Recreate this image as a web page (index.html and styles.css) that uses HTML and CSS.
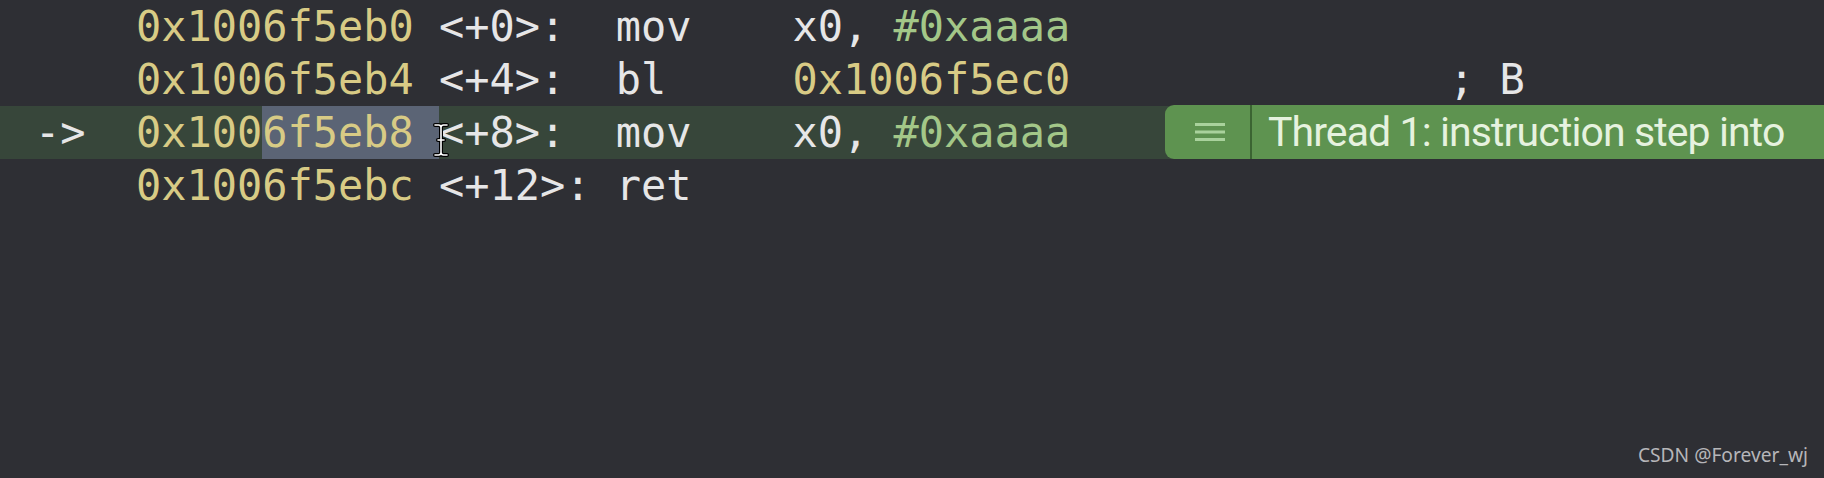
FILE: index.html
```html
<!DOCTYPE html>
<html>
<head>
<meta charset="utf-8">
<link rel="stylesheet" href="styles.css">
</head>
<body>
<div class="screen">
  <div class="code">
    <div class="row"><span class="txt">    <span class="num">0x1006f5eb0</span> <span class="pl">&lt;+0&gt;:</span>  <span class="pl">mov</span>    <span class="pl">x0,</span> <span class="imm">#0xaaaa</span></span></div>
    <div class="row"><span class="txt">    <span class="num">0x1006f5eb4</span> <span class="pl">&lt;+4&gt;:</span>  <span class="pl">bl</span>     <span class="num">0x1006f5ec0</span>               <span class="pl">; B</span></span></div>
    <div class="row current"><span class="txt"><span class="pl">-&gt;</span>  <span class="num">0x100</span><span class="sel"><span class="num">6f5eb8</span> </span><span class="cursor-wrap"><svg class="ibeam" width="16" height="34" viewBox="0 0 16 34"><path d="M2 2h3.5c1.5 0 2.5 1 2.5 2.5c0-1.5 1-2.5 2.5-2.5H14M8 4.5V29.5M2 32h3.5c1.5 0 2.5-1 2.5-2.5c0 1.5 1 2.5 2.5 2.5H14M5 17h6" fill="none" stroke="#000" stroke-width="4" stroke-linecap="round"/><path d="M2 2h3.5c1.5 0 2.5 1 2.5 2.5c0-1.5 1-2.5 2.5-2.5H14M8 4.5V29.5M2 32h3.5c1.5 0 2.5-1 2.5-2.5c0 1.5 1 2.5 2.5 2.5H14M5 17h6" fill="none" stroke="#fff" stroke-width="1.6" stroke-linecap="round"/></svg></span><span class="pl">&lt;+8&gt;:</span>  <span class="pl">mov</span>    <span class="pl">x0,</span> <span class="imm">#0xaaaa</span></span>
      <div class="badge"><span class="badge-icon"><svg width="32" height="20" viewBox="0 0 32 20"><path d="M1 2.5h30M1 10h30M1 17.5h30" stroke="#a9d29c" stroke-width="3"/></svg></span><span class="badge-text">Thread 1: instruction step into</span></div>
    </div>
    <div class="row"><span class="txt">    <span class="num">0x1006f5ebc</span> <span class="pl">&lt;+12&gt;:</span> <span class="pl">ret</span></span></div>
  </div>
  <div class="footer"><span class="mark">CSDN @Forever_wj</span></div>
</div>
</body>
</html>
```
FILE: styles.css
```css
html, body {
  margin: 0;
  padding: 0;
  background: #2e2f34;
}
.screen {
  width: 1824px;
  height: 478px;
  display: flex;
  flex-direction: column;
  overflow: hidden;
}
.code {
  display: flex;
  flex-direction: column;
}
.row {
  height: 53px;
  display: flex;
  align-items: stretch;
  padding-left: 35px;
}
.txt {
  display: block;
  font-family: "DejaVu Sans Mono", monospace;
  font-size: 41.94px;
  line-height: 53px;
  white-space: pre;
  color: #e6e6e7;
}
.num { color: #d8cb85; }
.pl { color: #e6e6e7; }
.imm { color: #a3c788; }
.current {
  background: #37463a;
}
.sel {
  background: #5b6475;
  white-space: pre;
  display: inline-block;
  height: 53px;
}
.cursor-wrap {
  position: relative;
  display: inline-block;
  width: 0;
  height: 53px;
  vertical-align: top;
}
.ibeam {
  position: absolute;
  left: -6px;
  top: 17px;
}
.badge {
  margin-left: auto;
  margin-top: -1px;
  height: 54px;
  width: 659px;
  display: flex;
  align-items: center;
  background: #5e9350;
  border-radius: 9px 0 0 9px;
}
.badge-icon {
  width: 87px;
  height: 100%;
  display: flex;
  align-items: center;
  justify-content: center;
  border-right: 2px solid #3b6432;
  box-sizing: border-box;
  padding-left: 4px;
}
.badge-text {
  padding-left: 16px;
  font-family: Roboto, "Liberation Sans", sans-serif;
  font-size: 41px;
  letter-spacing: -0.9px;
  color: #e6f2df;
  white-space: nowrap;
}
.footer {
  margin-top: auto;
  height: 50px;
  display: flex;
  justify-content: flex-end;
  align-items: flex-start;
  padding-right: 16px;
}
.mark {
  font-family: "Noto Sans", "Open Sans", sans-serif;
  font-size: 19.2px;
  color: #b6b6b9;
  margin-top: 13px;
}
```
